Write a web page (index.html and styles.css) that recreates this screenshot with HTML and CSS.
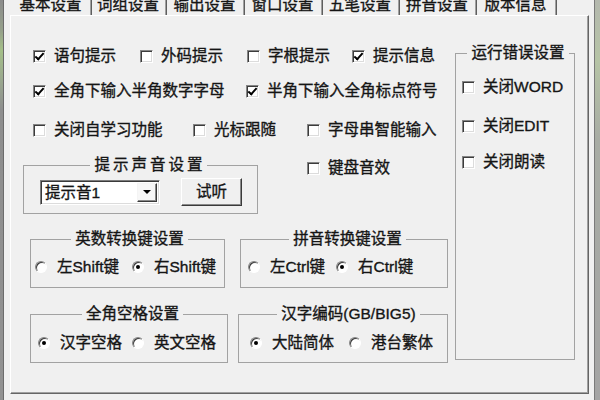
FILE: index.html
```html
<!DOCTYPE html>
<html lang="zh-CN">
<head>
<meta charset="utf-8">
<title>基本设置</title>
<link rel="stylesheet" href="styles.css">
</head>
<body>
<div class="edge edge-left"></div>
<div class="win">
  <div class="tabs">
    <div class="tab tab-active t80">基本设置</div>
    <div class="tab t75">词组设置</div>
    <div class="tab t78">输出设置</div>
    <div class="tab t78">窗口设置</div>
    <div class="tab t77">五笔设置</div>
    <div class="tab t77">拼音设置</div>
    <div class="tab t80">版本信息</div>
  </div>
  <div class="panel">
    <div class="left">
      <div class="row row1">
        <label class="chk c107"><span class="box on"></span>语句提示</label>
        <label class="chk c107"><span class="box"></span>外码提示</label>
        <label class="chk c105"><span class="box"></span>字根提示</label>
        <label class="chk"><span class="box on"></span>提示信息</label>
      </div>
      <div class="row row2">
        <label class="chk c213"><span class="box on"></span>全角下输入半角数字字母</label>
        <label class="chk"><span class="box on"></span>半角下输入全角标点符号</label>
      </div>
      <div class="row row3">
        <label class="chk c160"><span class="box"></span>关闭自学习功能</label>
        <label class="chk c114"><span class="box"></span>光标跟随</label>
        <label class="chk"><span class="box"></span>字母串智能输入</label>
      </div>
      <div class="sound-row">
        <fieldset class="grp grp-sound">
          <legend class="spaced">提示声音设置</legend>
          <div class="sound-line">
            <div class="combo">
              <span class="combo-text">提示音1</span>
              <span class="combo-btn"><span class="arrow"></span></span>
            </div>
            <button class="btn" type="button">试听</button>
          </div>
        </fieldset>
        <label class="chk chk-beep"><span class="box"></span>键盘音效</label>
      </div>
      <div class="grp-row grp-a">
        <fieldset class="grp grp-a1">
          <legend>英数转换键设置</legend>
          <div class="radios">
            <label class="rad"><span class="dot"></span>左Shift键</label>
            <label class="rad"><span class="dot on"></span>右Shift键</label>
          </div>
        </fieldset>
        <fieldset class="grp grp-a2">
          <legend>拼音转换键设置</legend>
          <div class="radios">
            <label class="rad"><span class="dot"></span>左Ctrl键</label>
            <label class="rad"><span class="dot on"></span>右Ctrl键</label>
          </div>
        </fieldset>
      </div>
      <div class="grp-row grp-b">
        <fieldset class="grp grp-b1">
          <legend>全角空格设置</legend>
          <div class="radios">
            <label class="rad"><span class="dot on"></span>汉字空格</label>
            <label class="rad"><span class="dot"></span>英文空格</label>
          </div>
        </fieldset>
        <fieldset class="grp grp-b2">
          <legend>汉字编码(GB/BIG5)</legend>
          <div class="radios">
            <label class="rad"><span class="dot on"></span>大陆简体</label>
            <label class="rad"><span class="dot"></span>港台繁体</label>
          </div>
        </fieldset>
      </div>
    </div>
    <fieldset class="grp grp-err">
      <legend>运行错误设置</legend>
      <label class="chk err-row"><span class="box"></span>关闭WORD</label>
      <label class="chk err-row err-2"><span class="box"></span>关闭EDIT</label>
      <label class="chk err-row err-3"><span class="box"></span>关闭朗读</label>
    </fieldset>
  </div>
</div>
<div class="edge edge-right"></div>
</body>
</html>
```

FILE: styles.css
```css
* { box-sizing: border-box; }
html, body { margin: 0; padding: 0; }
body {
  width: 600px;
  height: 400px;
  overflow: hidden;
  display: flex;
  background: #f0f0f0;
  color: #151515;
  font-family: "Liberation Sans", "Noto Sans CJK SC", sans-serif;
  font-size: 15.5px;
  line-height: 20px;
  -webkit-text-stroke: 0.35px #151515;
}

/* outer window edges */
.edge { flex: none; height: 400px; }
.edge-left {
  width: 4px;
  background: linear-gradient(to bottom, #8c8c8c 0, #95a08a 30px, #a4bf88 50px, #9aa88e 80px, #8e8e8e 110px, #929292 100%);
  box-shadow: inset -1px 0 #6c6c6c;
}
.edge-right {
  width: 6px;
  background: linear-gradient(to bottom, #b4b8ae 0, #b6c4a6 60px, #a8aca4 140px, #a4a4a4 100%);
  box-shadow: inset 1px 0 #7a7a7a;
}
.win {
  flex: 1;
  display: flex;
  flex-direction: column;
  padding: 0 5px 0 6px;
}

/* tab strip */
.tabs {
  display: flex;
  height: 20px;
  margin-top: -5px;
  padding-left: 2px;
}
.tab {
  flex: none;
  text-align: center;
  white-space: nowrap;
  border-right: 1px solid #5e5e5e;
  box-shadow: inset -1px 0 #a0a0a0;
  padding-right: 2px;
}
.t75 { width: 75px; }
.t77 { width: 77px; }
.t78 { width: 78px; }
.t80 { width: 80px; }

/* tab page */
.panel {
  height: 379px;
  display: grid;
  grid-template-columns: 444px 120px;
  align-items: start;
  border-top: 1px solid #ffffff;
  border-left: 1px solid #ffffff;
  border-right: 1px solid #656565;
  border-bottom: 1px solid #656565;
  box-shadow: inset -1px -1px #a0a0a0;
}

.row {
  display: flex;
  align-items: center;
  height: 20px;
}
.row1 { margin: 30px 0 0 22px; }
.row2 { margin: 15px 0 0 22px; }
.row3 { margin: 19px 0 0 22px; }

.c105 { width: 105px; }
.c107 { width: 107px; }
.c114 { width: 114px; }
.c160 { width: 160px; }
.c213 { width: 213px; }

/* checkbox */
.chk {
  display: flex;
  align-items: center;
  flex: none;
  height: 20px;
  white-space: nowrap;
}
.box {
  position: relative;
  flex: none;
  width: 13px;
  height: 13px;
  margin-right: 8px;
  background: #ffffff;
  border: 1px solid;
  border-color: #858585 #ffffff #ffffff #858585;
  box-shadow: inset 1px 1px #3c3c3c, inset -1px -1px #dcdcdc;
}
.box.on::after {
  content: "";
  position: absolute;
  left: 3px;
  top: 0px;
  width: 3px;
  height: 7px;
  border: solid #000;
  border-width: 0 2px 2px 0;
  transform: rotate(42deg);
}

/* radio */
.rad {
  display: flex;
  align-items: center;
  flex: none;
  height: 20px;
  white-space: nowrap;
}
.dot {
  position: relative;
  flex: none;
  width: 12px;
  height: 12px;
  margin-right: 10px;
  border-radius: 50%;
  background: #ffffff;
  border: 1px solid;
  border-color: #868686 #ffffff #ffffff #868686;
  box-shadow: inset 1px 1px #3c3c3c;
}
.dot.on::after {
  content: "";
  position: absolute;
  left: 3px;
  top: 3px;
  width: 4px;
  height: 4px;
  border-radius: 50%;
  background: #000;
}

/* group boxes */
.grp {
  margin: 0;
  min-width: 0;
  border: 1px solid #a2a2a2;
}
.grp legend {
  margin: 0 auto;
  padding: 0 4px;
  line-height: 20px;
  white-space: nowrap;
}
.grp legend.spaced { letter-spacing: 3px; padding: 0 1px 0 4px; }

.sound-row {
  display: flex;
  align-items: flex-start;
  margin: 15px 0 0 12px;
}
.grp-sound {
  width: 235px;
  padding: 2px 0 6px 16px;
}
.sound-line {
  display: flex;
  align-items: center;
  gap: 21px;
  height: 30px;
}
.chk-beep { margin: 3px 0 0 49px; }

.combo {
  display: flex;
  width: 120px;
  height: 25px;
  padding: 2px;
  background: #ffffff;
  border: 1px solid;
  border-color: #7c7c7c #ffffff #ffffff #7c7c7c;
  box-shadow: inset 1px 1px #3a3a3a, inset -1px -1px #dcdcdc;
}
.combo-text {
  flex: 1;
  padding-left: 2px;
  line-height: 19px;
}
.combo-btn {
  display: flex;
  align-items: center;
  justify-content: center;
  width: 20px;
  background: #f7f7f7;
  border: 1px solid;
  border-color: #f4f4f4 #3a3a3a #3a3a3a #f4f4f4;
  box-shadow: inset -1px -1px #8a8a8a;
}
.arrow {
  width: 0;
  height: 0;
  border-left: 4px solid transparent;
  border-right: 4px solid transparent;
  border-top: 4px solid #000;
}
.btn {
  width: 61px;
  height: 28px;
  padding: 0;
  font: inherit;
  color: inherit;
  background: #f0f0f0;
  border: 1px solid;
  border-color: #ffffff #3a3a3a #3a3a3a #ffffff;
  box-shadow: inset -1px -1px #8a8a8a;
}

.grp-row { display: flex; margin-left: 19px; }
.grp-a { margin-top: 15px; }
.grp-b { margin-top: 16px; }
.radios { display: flex; height: 20px; }

.grp-a1 { width: 195px; padding: 8px 0 10px 4px; }
.grp-a1 .radios { gap: 13px; }
.grp-a2 { width: 208px; margin-left: 15px; padding: 8px 0 10px 7px; }
.grp-a2 .radios { gap: 11px; }
.grp-b1 { width: 198px; padding: 9px 0 9px 7px; }
.grp-b1 .radios { gap: 10px; }
.grp-b2 { width: 210px; margin-left: 10px; padding: 9px 0 9px 11px; }
.grp-b2 .radios { gap: 15px; }

/* right column */
.grp-err {
  width: 120px;
  height: 317px;
  margin-top: 27px;
  padding: 14px 0 0 6px;
}
.err-2 { margin-top: 19px; }
.err-3 { margin-top: 16px; }
```
